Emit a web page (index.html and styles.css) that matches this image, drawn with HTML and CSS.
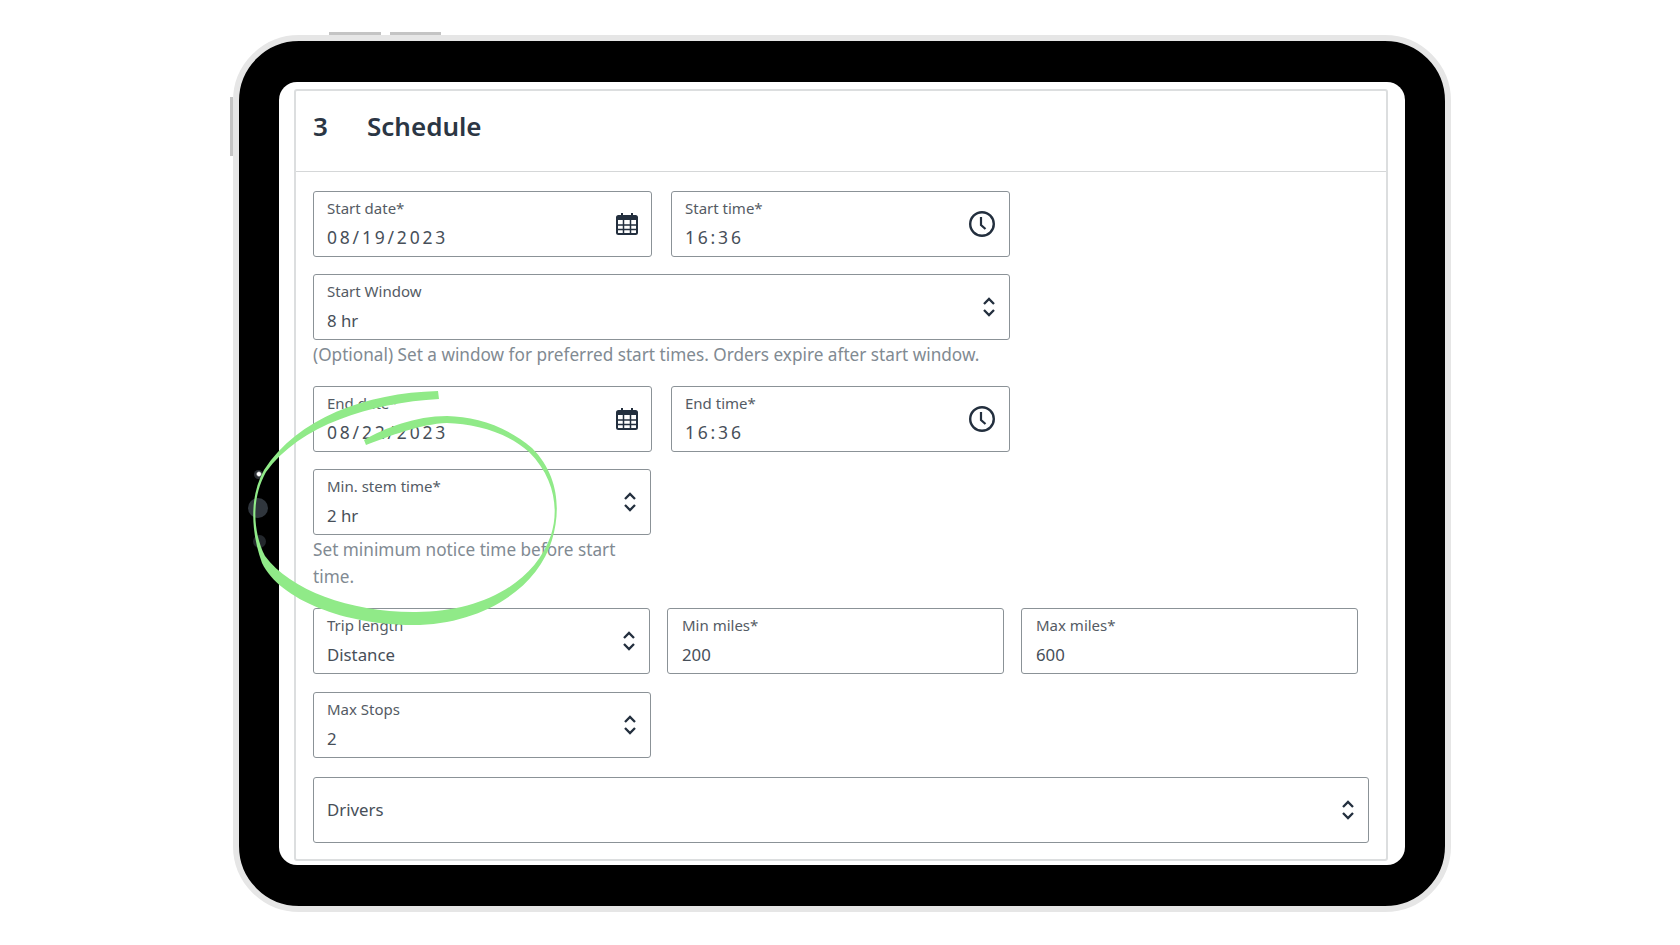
FILE: index.html
```html
<!DOCTYPE html>
<html lang="en">

<head>
    <meta charset="UTF-8">
    <title>Schedule</title>
    <link rel="stylesheet" href="styles.css">
</head>

<body>
    <svg width="0" height="0" class="icon_defs">
        <symbol id="i_calendar" viewBox="0 0 22 22">
            <path d="M6 0v4M16 0v4" fill="none" stroke="#232f3e" stroke-width="2" />
            <rect x="1" y="3" width="20" height="18" rx="1.5" fill="none" stroke="#232f3e" stroke-width="2" />
            <path d="M1 4h20v3H1z" fill="#232f3e" />
            <path d="M1 12h20M1 16.500h20M7.500 7v14M14.500 7v14" fill="none" stroke="#232f3e" stroke-width="1.500" />
        </symbol>
        <symbol id="i_clock" viewBox="0 0 26 26">
            <circle cx="13" cy="13" r="11.800" fill="none" stroke="#232f3e" stroke-width="2.400" />
            <path d="M12 6v8l4.500 4" fill="none" stroke="#232f3e" stroke-width="2.200" />
        </symbol>
        <symbol id="i_updown" viewBox="0 0 12 20">
            <path d="M1 7l5-5 5 5M1 13l5 5 5-5" fill="none" stroke="#232f3e" stroke-width="2.300" />
        </symbol>
    </svg>

    <div class="device">
        <span class="device_btn device_btn_a"></span>
        <span class="device_btn device_btn_b"></span>
        <span class="device_btn device_btn_side"></span>
        <span class="lens lens_a"></span>
        <span class="lens lens_b"></span>
        <span class="lens lens_c"></span>

        <div class="screen">
            <div class="card">
                <div class="card_head">
                    <span class="step_no">3</span>
                    <span class="step_title">Schedule</span>
                </div>
                <div class="card_body">
                    <div class="row row_gap19">
                        <div class="field w339">
                            <div class="field_text">
                                <div class="field_label">Start date*</div>
                                <div class="field_value spaced">08/19/2023</div>
                            </div>
                            <svg class="ic_calendar"><use href="#i_calendar" /></svg>
                        </div>
                        <div class="field w339">
                            <div class="field_text">
                                <div class="field_label">Start time*</div>
                                <div class="field_value spaced">16:36</div>
                            </div>
                            <svg class="ic_clock"><use href="#i_clock" /></svg>
                        </div>
                    </div>

                    <div class="row row_help">
                        <div class="field w697">
                            <div class="field_text">
                                <div class="field_label">Start Window</div>
                                <div class="field_value">8 hr</div>
                            </div>
                            <svg class="ic_updown"><use href="#i_updown" /></svg>
                        </div>
                    </div>
                    <div class="help">(Optional) Set a window for preferred start times. Orders expire after start window.</div>

                    <div class="row row_gap19">
                        <div class="field w339">
                            <div class="field_text">
                                <div class="field_label">End date*</div>
                                <div class="field_value spaced">08/22/2023</div>
                            </div>
                            <svg class="ic_calendar"><use href="#i_calendar" /></svg>
                        </div>
                        <div class="field w339">
                            <div class="field_text">
                                <div class="field_label">End time*</div>
                                <div class="field_value spaced">16:36</div>
                            </div>
                            <svg class="ic_clock"><use href="#i_clock" /></svg>
                        </div>
                    </div>

                    <div class="row row_help">
                        <div class="field w338">
                            <div class="field_text">
                                <div class="field_label">Min. stem time*</div>
                                <div class="field_value">2 hr</div>
                            </div>
                            <svg class="ic_updown"><use href="#i_updown" /></svg>
                        </div>
                    </div>
                    <div class="help help_narrow">Set minimum notice time before start time.</div>

                    <div class="row row_gap17">
                        <div class="field w337">
                            <div class="field_text">
                                <div class="field_label">Trip length</div>
                                <div class="field_value">Distance</div>
                            </div>
                            <svg class="ic_updown"><use href="#i_updown" /></svg>
                        </div>
                        <div class="field w337 field_miles">
                            <div class="field_text">
                                <div class="field_label">Min miles*</div>
                                <div class="field_value">200</div>
                            </div>
                        </div>
                        <div class="field w337 field_miles">
                            <div class="field_text">
                                <div class="field_label">Max miles*</div>
                                <div class="field_value">600</div>
                            </div>
                        </div>
                    </div>

                    <div class="row row_last">
                        <div class="field w338">
                            <div class="field_text">
                                <div class="field_label">Max Stops</div>
                                <div class="field_value">2</div>
                            </div>
                            <svg class="ic_updown"><use href="#i_updown" /></svg>
                        </div>
                    </div>

                    <div class="field w1056">
                        <div class="field_value field_value_only">Drivers</div>
                        <svg class="ic_updown"><use href="#i_updown" /></svg>
                    </div>
                </div>
            </div>
        </div>
    </div>

    <!-- hand drawn circle round the stem time field -->
    <svg class="scribble" viewBox="0 0 1680 945">
        <path fill="#90ea88" d="M438 391C365 393 298 418 264 470C250 495 250 530 262 563C280 600 345 625 413 625C480 625 537 590 552 540C561 510 559 475 532 448C505 425 475 417 447 416C415 416 385 428 364 440L366 445C390 436 420 424 447 423C475 424 507 432 529 452C555 478 559 510 551 535C534 585 478 613 413 612C350 612 290 590 265 556C252 530 252 497 266 472C300 425 370 403 439 399Z" />
    </svg>
</body>

</html>
```

FILE: styles.css
```css
html,
body {
    margin: 0;
    height: 100%;
    background-color: white;
    font-family: "Noto Sans", "Open Sans", Arial, sans-serif;
}

body {
    position: relative;
    overflow: hidden;
    padding: 35px 0 0 233px;
    box-sizing: border-box;
}

.icon_defs {
    display: block;
}

.device {
    position: relative;
    width: 1218px;
    height: 877px;
    padding: 41px 40px 40px 40px;
    box-sizing: border-box;
    background: black;
    border: 6px solid #e6e6e6;
    border-radius: 66px;
}

.device_btn {
    position: absolute;
    background: #c4c4c4;
}

.device_btn_a {
    top: -9px;
    left: 90px;
    width: 52px;
    height: 3px;
}

.device_btn_b {
    top: -9px;
    left: 151px;
    width: 51px;
    height: 3px;
}

.device_btn_side {
    top: 56px;
    left: -9px;
    width: 3px;
    height: 59px;
}

.lens {
    position: absolute;
    border-radius: 50%;
    background: #30363d;
}

.lens_a {
    top: 429px;
    left: 15px;
    width: 9px;
    height: 9px;
    background: radial-gradient(circle at 55% 45%, #ffffff 0, #ffffff 1.500px, #2a2e33 3px);
}

.lens_b {
    top: 457px;
    left: 9px;
    width: 20px;
    height: 20px;
}

.lens_c {
    top: 494px;
    left: 14px;
    width: 13px;
    height: 13px;
    background: #23272c;
}

.screen {
    height: 783px;
    padding: 7px 17px 0 15px;
    box-sizing: border-box;
    overflow: hidden;
    background: white;
    border-radius: 18px;
}

.card {
    height: 772px;
    box-sizing: border-box;
    border: 2px solid #dcdedf;
    border-radius: 3px;
}

.card_head {
    display: flex;
    align-items: center;
    height: 81px;
    padding: 0 0 11px 17px;
    box-sizing: border-box;
    border-bottom: 1px solid #d5d7d8;
    font-size: 26px;
    font-weight: 600;
    color: #2b3644;
}

.step_no {
    width: 54px;
}

.card_body {
    padding: 19px 0 0 17px;
}

.row {
    display: flex;
    margin-bottom: 17px;
}

.row_gap19 {
    gap: 19px;
}

.row_gap17 {
    gap: 17px;
    margin-bottom: 18px;
}

.row_help {
    margin-bottom: 0;
}

.row_last {
    margin-bottom: 19px;
}

.field {
    display: flex;
    align-items: center;
    justify-content: space-between;
    height: 66px;
    padding: 0 14px 0 13px;
    box-sizing: border-box;
    background: white;
    border: 1.500px solid #8b9297;
    border-radius: 3px;
}

.field_miles {
    padding-left: 14px;
}

.w337 {
    width: 337px;
}

.w338 {
    width: 338px;
}

.w339 {
    width: 339px;
}

.w697 {
    width: 697px;
}

.w1056 {
    width: 1056px;
}

.field_text {
    padding-bottom: 1px;
}

.field_label {
    font-size: 15px;
    line-height: 20px;
    color: #545b64;
}

.field_value {
    margin-top: 8px;
    font-size: 16.800px;
    line-height: 23px;
    color: #474f59;
}

.field_value_only {
    margin-top: 0;
    padding-bottom: 2px;
}

.spaced {
    font-size: 17.500px;
    letter-spacing: 2.800px;
}

.help {
    margin: 1px 0 18px;
    font-size: 17.200px;
    line-height: 27px;
    color: #818a92;
}

.help_narrow {
    width: 338px;
}

.ic_calendar {
    width: 22px;
    height: 22px;
    margin-right: -1px;
}

.ic_clock {
    width: 26px;
    height: 26px;
}

.ic_updown {
    width: 12px;
    height: 20px;
}

.scribble {
    position: absolute;
    top: 0;
    left: 0;
    width: 1680px;
    height: 945px;
}
```
